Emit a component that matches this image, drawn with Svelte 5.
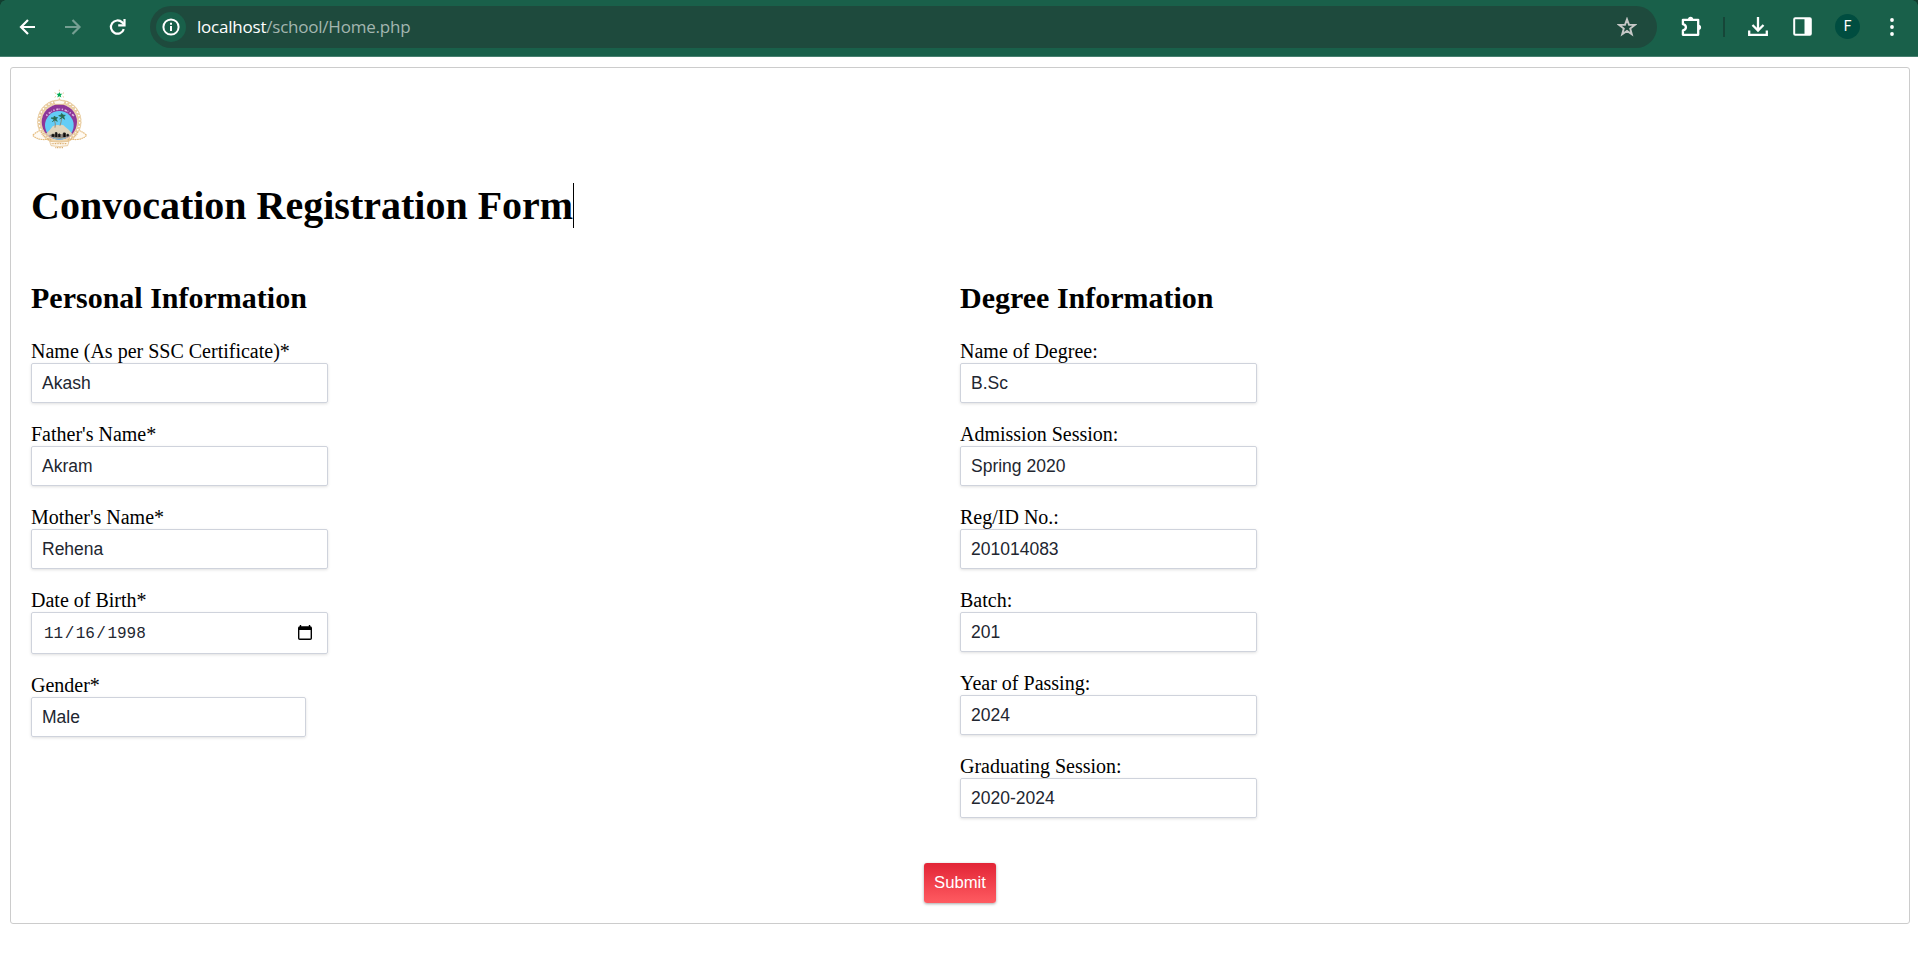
<script>
  const personal = [
    { label: 'Name (As per SSC Certificate)*', value: 'Akash' },
    { label: "Father's Name*", value: 'Akram' },
    { label: "Mother's Name*", value: 'Rehena' },
    { label: 'Date of Birth*', date: ['11', '16', '1998'] },
    { label: 'Gender*', value: 'Male', narrow: true }
  ];
  const degree = [
    { label: 'Name of Degree:', value: 'B.Sc' },
    { label: 'Admission Session:', value: 'Spring 2020' },
    { label: 'Reg/ID No.:', value: '201014083' },
    { label: 'Batch:', value: '201' },
    { label: 'Year of Passing:', value: '2024' },
    { label: 'Graduating Session:', value: '2020-2024' }
  ];
  const beads = Array.from({ length: 29 }, (_, i) => {
    const a = ((-235 + i * 10.4) * Math.PI) / 180;
    return { x: 178 + 61 * Math.cos(a), y: 184 + 60 * Math.sin(a) };
  });
</script>

{#snippet column(title, fields)}
  <section class="column">
    <h2>{title}</h2>
    {#each fields as f}
      <div class="field">
        <span class="label">{f.label}</span>
        <div class="input" class:narrow={f.narrow} class:date={f.date}>
          {#if f.date}
            <span class="parts">
              <span>{f.date[0]}</span><span class="slash">/</span><span>{f.date[1]}</span><span class="slash">/</span><span>{f.date[2]}</span>
            </span>
            <svg class="calendar" viewBox="0 0 14 16" width="14" height="16">
              <path d="M2.5 0v3M11.5 0v3" stroke="#000" stroke-width="1.4" />
              <path d="M1.8 1.2h10.4Q14 1.2 14 3v10.3q0 1.7-1.8 1.7H1.8Q0 15 0 13.300V3Q0 1.200 1.800 1.200ZM1.400 5v8.600h11.200V5Z" fill="#000" fill-rule="evenodd" />
            </svg>
          {:else}
            {f.value}
          {/if}
        </div>
      </div>
    {/each}
  </section>
{/snippet}

<header class="toolbar">
  <span class="corner left"></span>
  <span class="corner right"></span>
  <svg class="nav" viewBox="0 0 18 18" width="18" height="18"><path d="M16 9H2.500M9 2 2 9l7 7" /></svg>
  <svg class="nav forward" viewBox="0 0 18 18" width="18" height="18"><path d="M1 9h14M8.500 2l7 7-7 7" /></svg>
  <svg class="nav reload" viewBox="0 0 18 18" width="18" height="18">
    <path d="M14.800 11.100A6.600 6.600 0 1 1 13.200 4.400L15 6.200" />
    <path d="M15.500 1v6.300H9.200" />
  </svg>
  <div class="omnibox">
    <span class="info">
      <svg viewBox="0 0 18 18" width="18" height="18">
        <circle cx="9" cy="9" r="7.600" fill="none" stroke="#fff" stroke-width="2" />
        <path d="M9 8v5M9 4.700v2" stroke="#fff" stroke-width="2" />
      </svg>
    </span>
    <span class="url"><b>localhost</b>/school/Home.php</span>
    <svg class="star" viewBox="0 0 20 20" width="20" height="20">
      <path d="M10 2.200 12 7.700l5.800.2-4.600 3.600 1.600 5.700L10 13.900l-4.800 3.300 1.600-5.700L2.200 7.900 8 7.700Z" />
    </svg>
  </div>
  <svg class="puzzle" viewBox="0 0 22 22" width="22" height="22">
    <path d="M2.900 3.800h15.300v15H2.900v-4.400q3-.6 3-3.100t-3-3.100Z" fill="none" stroke="#fff" stroke-width="2.300" stroke-linejoin="round" />
    <path d="M8 3.300a2.600 2.600 0 0 1 5.200 0ZM18.500 8.700a2.600 2.600 0 0 1 0 5.200Z" fill="#fff" />
  </svg>
  <span class="divider"></span>
  <svg class="download" viewBox="0 0 22 22" width="22" height="22">
    <path d="M11 1v13M5.500 9l5.500 5.500L16.500 9M2.200 14.500v4.300h17.600v-4.300" fill="none" stroke="#fff" stroke-width="2.300" />
  </svg>
  <svg class="panel" viewBox="0 0 19 19" width="19" height="19">
    <rect x="1.200" y="1.200" width="16.600" height="16.600" rx="1" fill="none" stroke="#fff" stroke-width="2" />
    <path d="M11.500 1h6.500v17h-6.500Z" fill="#fff" />
  </svg>
  <span class="avatar">F</span>
  <svg class="menu" viewBox="0 0 4 18" width="4" height="18">
    <circle cx="2" cy="2" r="1.900" /><circle cx="2" cy="9" r="1.900" /><circle cx="2" cy="16" r="1.900" />
  </svg>
</header>

<main class="form">
  <svg class="logo" viewBox="93 84 171 186" width="57" height="62">
    <circle cx="178" cy="185" r="59" fill="#fffaf0" stroke="#edd5ae" stroke-width="15" />
    {#each beads as b}
      <circle cx={b.x} cy={b.y} r="4" fill="#fff" stroke="#d8aa68" stroke-width="1.500" />
    {/each}
    <circle cx="178" cy="186" r="53" fill="#8d3799" />
    <path d="M139 167Q178 127 222 168" fill="none" stroke="#dcb7e2" stroke-width="5" stroke-dasharray="4 5 7 3 2 5" />
    <circle cx="178" cy="196" r="43" fill="#63cdf6" />
    <path d="M138 221q12-10 20-22 12-6 21-3 9-5 17 5 12 8 21 21-12 14-38 14t-41-15Z" fill="#dfd5bd" />
    <path d="M146 225q30-6 65 0-9 10-31 11-23 0-34-11Z" fill="#8e897f" />
    <path d="M156 230v-7h6v7M166 231v-13h5v13M176 231v-9h4v9M190 231v-12h6v12M201 229v-6h4v6" stroke="#292725" stroke-width="3" />
    <path d="M163 180q5 12 2 23M185 173q-1 13-5 24" fill="none" stroke="#8b806a" stroke-width="2.500" />
    <path d="m163 179-10-5 8-1 2-5 4 4 6 1-5 4 4 7-8-4-7 5ZM186 171l-10-4 7-2 2-5 4 5 7 1-5 4 3 8-7-5-8 4Z" fill="#286b50" stroke="#286b50" stroke-width="2" />
    <path d="M119 212q-10 4-21 14 11 11 25 12 15 2 21-2M239 212q10 4 21 14-11 11-25 12-15 2-21-2" fill="#fffaf2" stroke="#e5bd81" stroke-width="3.500" stroke-dasharray="5 1.500" />
    <path d="M124 216q11 22 31 24M233 216q-11 22-31 24" fill="none" stroke="#deb57a" stroke-width="6" stroke-dasharray="3 2" />
    <path d="M149 244q29 5 58 0l-4 13q-25 5-50 0Z" fill="#fffaf1" stroke="#deb57a" stroke-width="2" />
    <path d="M155 251h46M166 263h25" stroke="#dcaf70" stroke-width="4" stroke-dasharray="3 2" />
    <path d="M160 124q18-8 36 0l-5 9h-26Z" fill="#fffaf1" stroke="#ddb67e" stroke-width="2" />
    <path d="M178 89v5M164 98l4 3M192 98l-4 3M164 112l4-3M192 112l-4-3M178 118v-5" stroke="#dfba83" stroke-width="2.500" />
    <path d="m178 96 2.500 5.500h6.500l-5 4.500 2 6.500-6-4-6 4 2-6.500-5-4.500h6.500Z" fill="#00a94f" />
  </svg>
  <h1>Convocation Registration Form<span class="caret"></span></h1>
  <div class="columns">
    {@render column('Personal Information', personal)}
    {@render column('Degree Information', degree)}
  </div>
  <button type="button">Submit</button>
</main>

<style>
  :global(body) {
    margin: 0;
    background: #fff;
    overflow: hidden;
  }
  .toolbar {
    position: relative;
    box-sizing: border-box;
    height: 57px;
    padding: 0 20px 3px 19px;
    display: flex;
    align-items: center;
    background: #19604a;
    border-bottom: 1px solid #478070;
  }
  .corner {
    position: absolute;
    top: 0;
    width: 6px;
    height: 6px;
  }
  .corner.left {
    left: 0;
    background: radial-gradient(circle at 100% 100%, transparent 5.500px, #123e30 6px);
  }
  .corner.right {
    right: 0;
    background: radial-gradient(circle at 0 100%, transparent 5.500px, #123e30 6px);
  }
  .nav {
    fill: none;
    stroke: #fff;
    stroke-width: 2.200;
    flex: none;
  }
  .forward {
    margin-left: 27px;
    stroke: #759f92;
  }
  .reload {
    margin-left: 27px;
  }
  .omnibox {
    box-sizing: border-box;
    width: 1507px;
    height: 42px;
    margin-left: 23px;
    padding: 0 20px 0 6px;
    display: flex;
    align-items: center;
    border-radius: 21px;
    background: #1e4a3d;
  }
  .info {
    width: 30px;
    height: 30px;
    display: flex;
    align-items: center;
    justify-content: center;
    border-radius: 50%;
    background: #19604a;
  }
  .url {
    margin-left: 11px;
    padding-top: 1px;
    color: #a3b6b0;
    font: 17px/24px 'Open Sans', 'Noto Sans', sans-serif;
    letter-spacing: -0.220px;
    white-space: nowrap;
  }
  .url b {
    color: #fff;
    font-weight: 400;
  }
  .star {
    margin-left: auto;
    margin-top: 1px;
    fill: none;
    stroke: #c5c7c6;
    stroke-width: 1.900;
  }
  .puzzle {
    margin-left: 23px;
  }
  .divider {
    width: 2px;
    height: 20px;
    margin-left: 21px;
    background: #164638;
  }
  .download {
    margin-left: 22px;
  }
  .panel {
    margin-left: 24px;
  }
  .avatar {
    width: 25px;
    height: 25px;
    margin-left: 23px;
    border-radius: 50%;
    background: #004d40;
    color: #fff;
    font: 14px/25px Roboto, sans-serif;
    text-align: center;
  }
  .menu {
    margin-left: auto;
    margin-right: 4px;
    fill: #fff;
  }
  .form {
    box-sizing: border-box;
    height: 857px;
    margin: 10px 8px 0 10px;
    padding: 20px;
    display: flex;
    flex-direction: column;
    border: 1px solid #ccc;
    border-radius: 3px;
    font-family: 'Liberation Serif', serif;
    font-size: 20px;
    color: #000;
  }
  .logo {
    display: block;
  }
  h1 {
    margin: 33px 0 27px;
    display: flex;
    font-size: 40px;
    line-height: 45px;
  }
  .caret {
    width: 1px;
    background: #000;
  }
  .columns {
    display: grid;
    grid-template-columns: 929px 1fr;
  }
  h2 {
    margin: 26px 0 25px;
    font-size: 30px;
    line-height: 34px;
  }
  .field {
    margin-bottom: 20px;
  }
  .label {
    display: block;
    line-height: 23px;
  }
  .input {
    box-sizing: border-box;
    width: 297px;
    height: 40px;
    padding: 0 10px;
    display: flex;
    align-items: center;
    border: 1px solid #cfd3dc;
    border-radius: 2px;
    box-shadow: 0 1px 3px rgba(0, 0, 0, 0.12);
    color: #222630;
    font: 17.500px/20px 'Liberation Sans', sans-serif;
  }
  .narrow {
    width: 275px;
  }
  .date {
    height: 42px;
    padding: 0 15px 0 12px;
    justify-content: space-between;
    font: 16px/20px 'Liberation Mono', monospace;
  }
  .parts {
    display: flex;
    padding-top: 1px;
  }
  .slash {
    width: 12.500px;
    text-align: center;
  }
  button {
    align-self: center;
    width: 72px;
    height: 40px;
    margin: 25px 0 0;
    padding: 0 0 1px;
    border: 0;
    border-radius: 3px;
    background: linear-gradient(#e22536, #ff5b61);
    box-shadow: 0 1px 3px rgba(0, 0, 0, 0.35);
    color: #fff;
    font: 16.700px/20px 'Liberation Sans', sans-serif;
  }
</style>
